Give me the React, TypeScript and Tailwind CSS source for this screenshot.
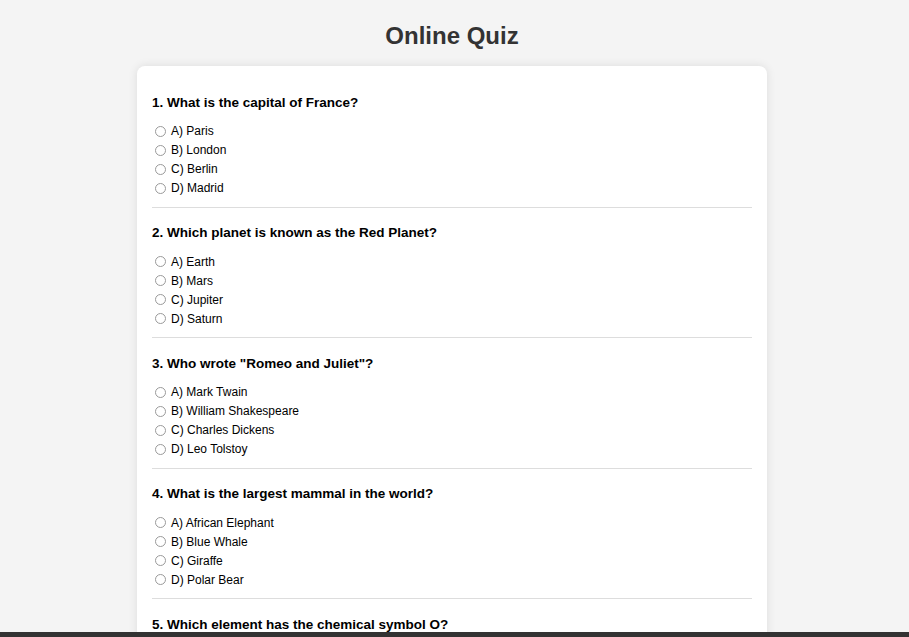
const questions = [
  {
    q: "1. What is the capital of France?",
    options: ["A) Paris", "B) London", "C) Berlin", "D) Madrid"],
  },
  {
    q: "2. Which planet is known as the Red Planet?",
    options: ["A) Earth", "B) Mars", "C) Jupiter", "D) Saturn"],
  },
  {
    q: '3. Who wrote "Romeo and Juliet"?',
    options: ["A) Mark Twain", "B) William Shakespeare", "C) Charles Dickens", "D) Leo Tolstoy"],
  },
  {
    q: "4. What is the largest mammal in the world?",
    options: ["A) African Elephant", "B) Blue Whale", "C) Giraffe", "D) Polar Bear"],
  },
  {
    q: "5. Which element has the chemical symbol O?",
    options: ["A) Gold", "B) Oxygen", "C) Silver", "D) Iron"],
  },
];

const Question = ({ index, q, options }: { index: number; q: string; options: string[] }) => {
  return (
    <div className="border-b border-[#ddd] pt-[15.5px] pb-[9px]">
      <p className="mb-[9px] text-[13.5px] leading-[20px] font-bold text-black">{q}</p>
      <div className="flex flex-col">
        {options.map((opt) => (
          <label key={opt} className="flex h-[19px] items-center text-[12px] text-black">
            <input
              type="radio"
              name={`q${index}`}
              className="m-0 mr-[5px] ml-[3px] h-[11px] w-[11px] appearance-none rounded-full border border-[#9a9a9a] bg-white checked:border-[3px] checked:border-[#1a73e8]"
            />
            {opt}
          </label>
        ))}
      </div>
    </div>
  );
};

export default function App() {
  return (
    <div
      className="min-h-screen bg-[#f4f4f4] pr-[5px]"
      style={{ fontFamily: '"Liberation Sans", Arial, sans-serif' }}
    >
      <h1 className="pt-[20px] pb-[14px] text-center text-[24px] leading-[32px] font-bold text-[#333]">
        Online Quiz
      </h1>
      <div className="mx-auto w-[630px] rounded-lg bg-white px-[15px] pt-[11px] pb-[20px] shadow-[0_0_10px_rgba(0,0,0,0.1)]">
        {questions.map((item, i) => (
          <Question key={i} index={i} q={item.q} options={item.options} />
        ))}
      </div>
      <div className="fixed inset-x-0 bottom-0 h-[5px] bg-[#333]" />
    </div>
  );
}
